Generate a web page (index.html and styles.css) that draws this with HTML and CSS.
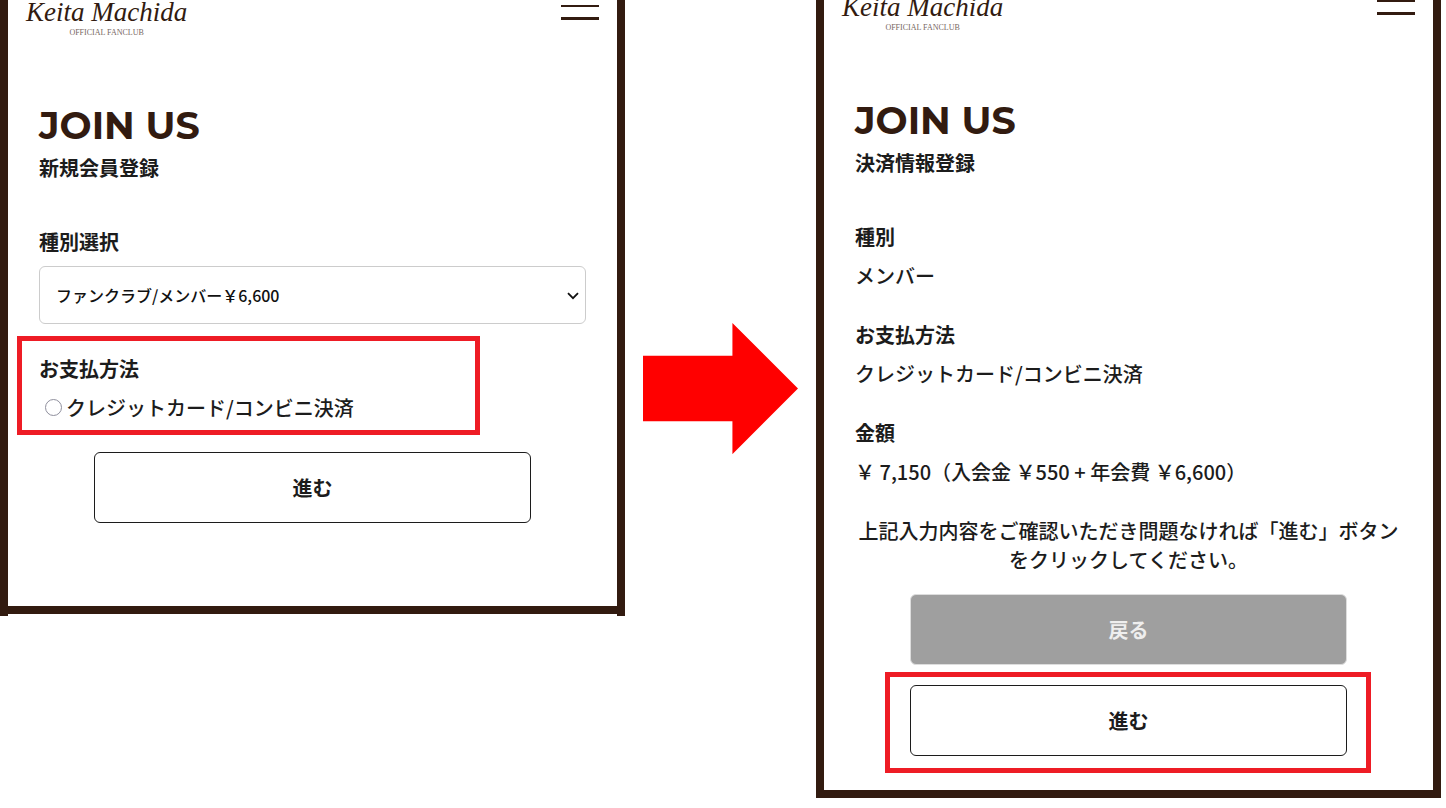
FILE: index.html
```html
<!DOCTYPE html>
<html lang="ja">
<head>
<meta charset="UTF-8" />
<meta name="viewport" content="width=device-width, initial-scale=1" />
<title>JOIN US | Keita Machida OFFICIAL FANCLUB</title>
<link rel="stylesheet" href="styles.css">
</head>
<body>
  <main class="flow">
    <section class="panel panel-entry">
      <header class="panel-header">
        <a href="#" class="logo">
          <span class="logo-sign">Keita Machida</span>
          <span class="logo-sub">OFFICIAL FANCLUB</span>
        </a>
        <button type="button" class="menu-btn" aria-label="メニュー">
          <span></span><span></span><span></span>
        </button>
      </header>
      <form class="panel-body">
        <h1>JOIN US</h1>
        <p class="subtitle">新規会員登録</p>

        <div class="field">
          <label class="label" for="plan">種別選択</label>
          <div class="select-wrap">
            <select id="plan">
              <option>ファンクラブ/メンバー￥6,600</option>
            </select>
            <svg class="chevron" width="12" height="8" viewBox="0 0 12 8" aria-hidden="true">
              <path d="M1 1.2 L6 6.2 L11 1.2" fill="none" stroke="#111" stroke-width="1.8" />
            </svg>
          </div>
        </div>

        <div class="field payment marked" role="group" aria-labelledby="pay-label">
          <p class="label" id="pay-label">お支払方法</p>
          <label class="radio"><input type="radio" name="pay" />クレジットカード/コンビニ決済</label>
        </div>

        <button type="button" class="btn">進む</button>
      </form>
    </section>

    <svg class="arrow" viewBox="0 0 156 132" aria-hidden="true">
      <path d="M0 33 H90 V0 L156 66 L90 132 V99 H0 Z" fill="#ff0000" />
    </svg>

    <section class="panel panel-confirm">
      <header class="panel-header">
        <a href="#" class="logo">
          <span class="logo-sign">Keita Machida</span>
          <span class="logo-sub">OFFICIAL FANCLUB</span>
        </a>
        <button type="button" class="menu-btn" aria-label="メニュー">
          <span></span><span></span><span></span>
        </button>
      </header>
      <form class="panel-body">
        <h1>JOIN US</h1>
        <p class="subtitle">決済情報登録</p>

        <dl class="summary">
          <div class="field">
            <dt class="label">種別</dt>
            <dd>メンバー</dd>
          </div>
          <div class="field">
            <dt class="label">お支払方法</dt>
            <dd>クレジットカード/コンビニ決済</dd>
          </div>
          <div class="field">
            <dt class="label">金額</dt>
            <dd>￥ 7,150（入会金 ￥550 + 年会費 ￥6,600）</dd>
          </div>
        </dl>

        <p class="note">上記入力内容をご確認いただき問題なければ「進む」ボタンをクリックしてください。</p>

        <div class="actions">
          <button type="button" class="btn btn-back">戻る</button>
          <div class="next marked">
            <button type="button" class="btn">進む</button>
          </div>
        </div>
      </form>
    </section>
  </main>
</body>
</html>
```
FILE: styles.css
```css
*, *::before, *::after {
  box-sizing: border-box;
}
body {
  margin: 0;
  background: #fff;
  color: #1c1c1c;
  font-family: "Noto Sans CJK JP", sans-serif;
  font-size: 20px;
  font-weight: 500;
  line-height: 29px;
}
h1, p, dl, dd {
  margin: 0;
}
.flow {
  display: grid;
  grid-template-columns: 1fr 155px 1fr;
  column-gap: 18px;
  align-items: start;
  padding-right: 5px;
}
/* PANEL */
.panel {
  border: solid #321b10;
  border-width: 0 8px;
}
.panel-entry {
  padding-bottom: 2px;
}
.panel-header {
  display: flex;
  justify-content: space-between;
  align-items: flex-end;
  height: 40px;
  padding: 0 18px;
  overflow: hidden;
}
.panel-confirm .panel-header {
  height: 35px;
}
.logo {
  display: flex;
  flex-direction: column;
  align-items: center;
  color: #321b10;
  text-decoration: none;
}
.logo-sign {
  font-family: "Liberation Serif", serif;
  font-size: 27px;
  font-style: italic;
  font-weight: 400;
  line-height: 28px;
}
.logo-sub {
  color: #77685f;
  font-family: "Liberation Serif", serif;
  font-size: 8px;
  font-weight: 400;
  line-height: 14px;
}
.menu-btn {
  display: flex;
  flex-direction: column;
  gap: 10px;
  width: 38px;
  padding: 0 0 20px;
  border: none;
  background: none;
  cursor: pointer;
}
.menu-btn span {
  width: 100%;
  height: 2px;
  background: #321b10;
}
.menu-btn span:last-child {
  height: 3px;
}
.panel-body {
  display: flex;
  flex-direction: column;
  padding: 62px 31px 34px;
  border-bottom: 8px solid #321b10;
}
.panel-entry .panel-body {
  padding-bottom: 83px;
}
h1 {
  color: #321b10;
  font-family: Montserrat, Inter, sans-serif;
  font-size: 38px;
  font-weight: 700;
  line-height: 48px;
}
.subtitle {
  margin: 3px 0 45px;
  font-weight: 700;
}
/* FORM */
.field {
  display: flex;
  flex-direction: column;
  gap: 10px;
}
.label {
  font-weight: 700;
}
.select-wrap {
  position: relative;
}
select {
  display: block;
  width: 100%;
  height: 58px;
  padding: 0 16px;
  border: 1px solid #ccc;
  border-radius: 6px;
  background: #fff;
  color: #111;
  font: inherit;
  font-size: 16px;
  appearance: none;
}
.chevron {
  position: absolute;
  top: 26px;
  right: 7px;
  pointer-events: none;
}
.payment {
  margin: 30px 0;
}
.radio {
  display: flex;
  align-items: center;
  gap: 4px;
  padding-left: 6px;
}
.radio input {
  width: 17px;
  height: 17px;
  margin: 0;
  border: 1px solid #8f8f9d;
  border-radius: 50%;
  background: #fff;
  appearance: none;
}
.radio input:checked {
  border: 5px solid #321b10;
}
.btn {
  align-self: center;
  width: 80%;
  height: 71px;
  border: 1px solid #1c1c1c;
  border-radius: 6px;
  background: #fff;
  color: #1c1c1c;
  font: inherit;
  font-weight: 700;
  cursor: pointer;
}
.btn-back {
  border-color: #ddd;
  background: #9f9f9f;
  color: #eee;
}
/* CONFIRM */
.summary {
  display: flex;
  flex-direction: column;
  gap: 30px;
}
.note {
  margin: 30px 0 20px;
  text-align: center;
}
.actions {
  display: flex;
  flex-direction: column;
  gap: 20px;
}
.next {
  align-self: center;
  width: 80%;
}
.next .btn {
  display: block;
  width: 100%;
}
/* red frames */
.marked {
  position: relative;
}
.marked::after {
  content: "";
  position: absolute;
  border: 5px solid #ee1c25;
  pointer-events: none;
}
.payment::after {
  inset: -18px 106px -13px -22px;
}
.next::after {
  inset: -13px -24px -17px -25px;
}
.arrow {
  width: 100%;
  margin-top: 323px;
}
@media (max-width: 900px) {
  .flow {
    grid-template-columns: 1fr;
    justify-items: center;
    row-gap: 24px;
    padding: 0;
  }
  .panel {
    width: 100%;
  }
  .arrow {
    width: 120px;
    margin: 0;
    transform: rotate(90deg);
  }
}
```
